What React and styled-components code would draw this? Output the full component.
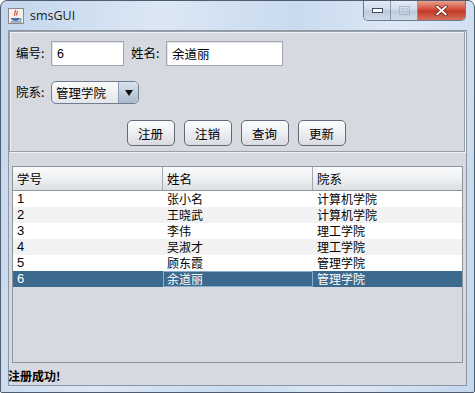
import React from "react";
import styled, { createGlobalStyle } from "styled-components";

const Global = createGlobalStyle`
  html, body { margin: 0; padding: 0; background: #ffffff; }
  body { width: 475px; height: 393px; overflow: hidden; }
`;

const CJK = `"Noto Sans CJK SC", "Noto Sans", sans-serif`;
const LAT = `"Liberation Sans", "Noto Sans CJK SC", sans-serif`;

const Window = styled.div`
  width: 475px;
  height: 393px;
  box-sizing: border-box;
  border: 1px solid #4f5d70;
  border-radius: 7px 7px 2px 2px;
  background: linear-gradient(100deg, #c3d6ec 0%, #dbe7f4 30%, #c9dbef 55%, #dde9f5 75%, #c4d7ed 100%);
  display: flex;
  flex-direction: column;
  overflow: hidden;
`;

const TitleBar = styled.div`
  height: 29px;
  display: flex;
  align-items: flex-start;
  padding-left: 7px;
  position: relative;
`;

const TitleIcon = styled.div`
  width: 16px;
  height: 16px;
  margin-top: 7px;
`;

const TitleText = styled.div`
  font-family: "Open Sans", "Noto Sans", sans-serif;
  font-size: 12.5px;
  color: #1b1b1b;
  margin-top: 6px;
  margin-left: 6px;
`;

const Controls = styled.div`
  position: absolute;
  right: 8px;
  top: -1px;
  display: flex;
  height: 20px;
  border: 1px solid #6d7b8e;
  border-top: none;
  border-radius: 0 0 5px 5px;
  overflow: hidden;
`;

const CtlBtn = styled.div`
  width: ${(p) => p.$w}px;
  height: 20px;
  display: flex;
  align-items: center;
  justify-content: center;
  border-left: ${(p) => (p.$first ? "none" : "1px solid #8796a9")};
  background: ${(p) =>
    p.$close
      ? "linear-gradient(#e9a99c 0%, #d7533f 45%, #c03a26 55%, #d8705c 100%)"
      : "linear-gradient(#e6eef7 0%, #d2deeb 45%, #bccbdc 55%, #cfdcea 100%)"};
`;

const Client = styled.div`
  flex: 1;
  margin: 0 7px 6px 7px;
  background: #d6d9df;
  border: 1px solid #8a97a7;
  display: flex;
  flex-direction: column;
  font-family: ${CJK};
  font-size: 12px;
  color: #000;
`;

const TopPanel = styled.div`
  height: 121px;
  box-sizing: border-box;
  border: 1px solid #9a9fa6;
  box-shadow: inset 1px 1px 0 #f2f3f5, 1px 1px 0 #f2f3f5;
  margin: 0 1px 0 0;
  display: flex;
  flex-direction: column;
  padding: 9px 0 0 6px;
`;

const Row = styled.div`
  display: flex;
  align-items: center;
  height: ${(p) => p.$h}px;
  margin-bottom: ${(p) => p.$mb || 0}px;
`;

const Label = styled.span`
  margin-right: 2px;
  line-height: 1;
  font-size: 12.5px;
  width: ${(p) => (p.$w ? p.$w + "px" : "auto")};
`;

const TextBox = styled.div`
  width: ${(p) => p.$w}px;
  height: 25px;
  box-sizing: border-box;
  background: #fff;
  border: 1px solid #a0a7b2;
  box-shadow: inset 1px 1px 0 #e3e5e9;
  display: flex;
  align-items: center;
  padding-left: 5px;
  font-family: ${(p) => (p.$num ? LAT : CJK)};
  font-size: 12.5px;
  margin-right: ${(p) => p.$mr || 0}px;
`;

const Combo = styled.div`
  width: 88px;
  height: 23px;
  box-sizing: border-box;
  border: 1px solid #6f7d90;
  border-radius: 5px;
  display: flex;
  overflow: hidden;
  background: linear-gradient(#fbfbfc, #e3e5e9);
`;

const ComboText = styled.div`
  flex: 1;
  display: flex;
  align-items: center;
  padding-left: 4px;
  font-size: 12.5px;
`;

const ComboArrow = styled.div`
  width: 19px;
  border-left: 1px solid #8a9ab0;
  background: linear-gradient(#d9e2ec, #a9bbcf);
  display: flex;
  align-items: center;
  justify-content: center;
`;

const ButtonRow = styled.div`
  display: flex;
  justify-content: center;
  gap: 9px;
  margin-top: 16px;
  padding-right: 8px;
`;

const Button = styled.div`
  width: 48px;
  height: 26px;
  box-sizing: border-box;
  border: 1px solid #5f6b78;
  border-radius: 5px;
  background: linear-gradient(#fdfdfd 0%, #eceef1 50%, #d9dce1 100%);
  box-shadow: inset 0 1px 0 #fff;
  display: flex;
  align-items: center;
  justify-content: center;
  font-size: 12.5px;
`;

const TableWrap = styled.div`
  margin: 14px 3px 0 3px;
  height: 197px;
  box-sizing: border-box;
  border: 1px solid #8e949c;
  display: flex;
  flex-direction: column;
  background: #d6d9df;
`;

const Grid = styled.div`
  display: grid;
  grid-template-columns: 150px 150px 1fr;
`;

const HeadCell = styled.div`
  height: 24px;
  box-sizing: border-box;
  display: flex;
  align-items: center;
  padding-left: 4px;
  background: linear-gradient(#fafbfb 0%, #eef0f2 50%, #dcdfe3 100%);
  border-bottom: 1px solid #8e949c;
  border-right: ${(p) => (p.$last ? "none" : "1px solid #a3a8b0")};
  font-size: 12.5px;
`;

const Cell = styled.div`
  height: 16px;
  box-sizing: border-box;
  white-space: nowrap;
  background: ${(p) => (p.$sel ? "#3b6a8e" : p.$alt ? "#f2f2f2" : "#ffffff")};
  color: ${(p) => (p.$sel ? "#ffffff" : "#000")};
  border: ${(p) => (p.$focus ? "1px solid #86aed0" : "none")};
  padding-left: ${(p) => (p.$focus ? 3 : 4)}px;
  font-family: ${(p) => (p.$num ? LAT : CJK)};
  font-size: ${(p) => (p.$num ? 13 : 12)}px;
  line-height: ${(p) => (p.$focus ? 14 : 16)}px;
`;

const Status = styled.div`
  flex: 1;
  display: flex;
  align-items: center;
  font-size: 12px;
  font-weight: 700;
  margin-left: -1px;
  padding-top: 2px;
`;

const rows = [
  ["1", "张小名", "计算机学院"],
  ["2", "王晓武", "计算机学院"],
  ["3", "李伟", "理工学院"],
  ["4", "吴淑才", "理工学院"],
  ["5", "顾东霞", "管理学院"],
  ["6", "余道丽", "管理学院"],
];

export default function App() {
  return (
    <>
      <Global />
      <Window>
        <TitleBar>
          <TitleIcon>
            <svg width="16" height="16" viewBox="0 0 16 16">
              <rect x="0.5" y="0.5" width="15" height="15" fill="#f4f1ea" stroke="#8a8a8a" />
              <path d="M7 2c2 2-2 3 0 6M9 3c1.5 1.5-1.5 2.5 0 4.5" stroke="#d2442a" strokeWidth="1.1" fill="none" />
              <path d="M3 10h9c0 2-2 3-4.5 3S3 12 3 10z" fill="#4d6fa3" />
              <path d="M12 10.5c1.5 0 1.5 2 0 2" stroke="#4d6fa3" fill="none" />
              <path d="M2.5 14h11" stroke="#4d6fa3" />
            </svg>
          </TitleIcon>
          <TitleText>smsGUI</TitleText>
          <Controls>
            <CtlBtn $w={26} $first>
              <svg width="11" height="5" viewBox="0 0 11 5">
                <rect x="0.5" y="0.5" width="10" height="4" fill="#fff" stroke="#3d4c60" />
              </svg>
            </CtlBtn>
            <CtlBtn $w={26}>
              <svg width="11" height="9" viewBox="0 0 11 9">
                <rect x="0.5" y="0.5" width="10" height="8" fill="none" stroke="#a9b6c6" />
                <rect x="2.5" y="2.5" width="6" height="4" fill="none" stroke="#bcc7d4" />
              </svg>
            </CtlBtn>
            <CtlBtn $w={47} $close>
              <svg width="13" height="11" viewBox="0 0 13 11">
                <path d="M2 1.5l9 8M11 1.5l-9 8" stroke="#5a1a10" strokeWidth="3.2" strokeLinecap="round" />
                <path d="M2 1.5l9 8M11 1.5l-9 8" stroke="#ffffff" strokeWidth="1.8" strokeLinecap="round" />
              </svg>
            </CtlBtn>
          </Controls>
        </TitleBar>
        <Client>
          <TopPanel>
            <Row $h={25} $mb={15}>
              <Label $w={33}>编号:</Label>
              <TextBox $w={73} $mr={7} $num>6</TextBox>
              <Label $w={33}>姓名:</Label>
              <TextBox $w={117}>余道丽</TextBox>
            </Row>
            <Row $h={23}>
              <Label $w={33}>院系:</Label>
              <Combo>
                <ComboText>管理学院</ComboText>
                <ComboArrow>
                  <svg width="8" height="6" viewBox="0 0 8 6">
                    <path d="M0 0h8L4 6z" fill="#111" />
                  </svg>
                </ComboArrow>
              </Combo>
            </Row>
            <ButtonRow>
              <Button>注册</Button>
              <Button>注销</Button>
              <Button>查询</Button>
              <Button>更新</Button>
            </ButtonRow>
          </TopPanel>
          <TableWrap>
            <Grid>
              <HeadCell>学号</HeadCell>
              <HeadCell>姓名</HeadCell>
              <HeadCell $last>院系</HeadCell>
              {rows.map((r, i) => {
                const sel = i === 5;
                const alt = i % 2 === 1;
                return (
                  <React.Fragment key={i}>
                    <Cell $num $sel={sel} $alt={alt}>{r[0]}</Cell>
                    <Cell $sel={sel} $alt={alt} $focus={sel}>{r[1]}</Cell>
                    <Cell $sel={sel} $alt={alt}>{r[2]}</Cell>
                  </React.Fragment>
                );
              })}
            </Grid>
          </TableWrap>
          <Status>注册成功!</Status>
        </Client>
      </Window>
    </>
  );
}
